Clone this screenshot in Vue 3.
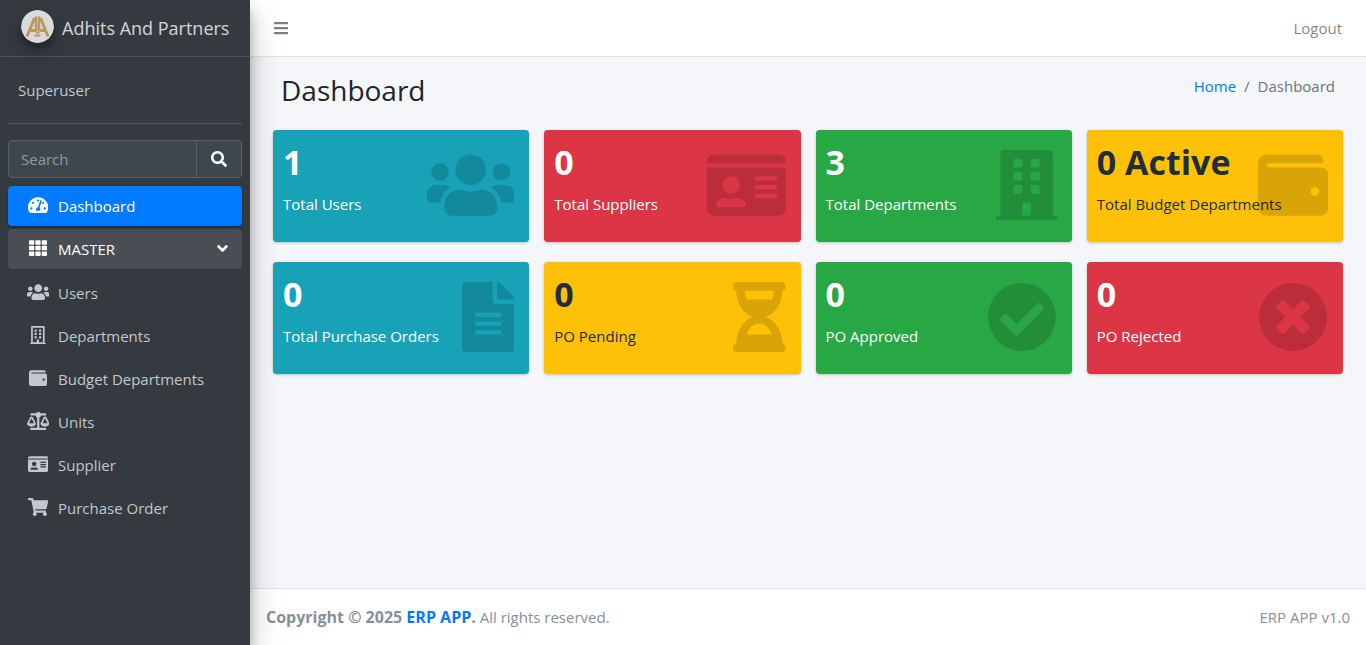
<script setup>
import { h, ref } from 'vue'

const roundedRect = (x, y, w, ht, r) =>
  `M${x + r} ${y}h${w - 2 * r}a${r} ${r} 0 0 1 ${r} ${r}v${ht - 2 * r}a${r} ${r} 0 0 1 ${-r} ${r}h${2 * r - w}a${r} ${r} 0 0 1 ${-r} ${-r}v${2 * r - ht}a${r} ${r} 0 0 1 ${r} ${-r}z`

const rectGrid = (xs, ys, w, ht, r) =>
  ys.map((y) => xs.map((x) => roundedRect(x, y, w, ht, r)).join('')).join('')

const buildingShell = 'M436 480h-20V24c0-13.3-10.7-24-24-24H56C42.7 0 32 10.7 32 24v456H12c-6.6 0-12 5.4-12 12v20h448v-20c0-6.6-5.4-12-12-12z'

const icons = {
  users: [640, 'M96 224c35.3 0 64-28.7 64-64s-28.7-64-64-64-64 28.7-64 64 28.7 64 64 64zm448 0c35.3 0 64-28.7 64-64s-28.7-64-64-64-64 28.7-64 64 28.7 64 64 64zm32 32h-64c-17.6 0-33.5 7.1-45.1 18.6 40.3 22.1 68.9 62 75.1 109.4h66c17.7 0 32-14.3 32-32v-32c0-35.3-28.7-64-64-64zm-256 0c61.9 0 112-50.1 112-112S381.9 32 320 32 208 82.1 208 144s50.1 112 112 112zm76.8 32h-8.3c-20.8 10-43.9 16-68.5 16s-47.6-6-68.5-16h-8.3C179.6 288 128 339.6 128 403.2V432c0 26.5 21.5 48 48 48h288c26.5 0 48-21.5 48-48v-28.8c0-63.6-51.6-115.2-115.2-115.2zm-223.7-13.4C161.5 263.1 145.6 256 128 256H64c-35.3 0-64 28.7-64 64v32c0 17.7 14.3 32 32 32h65.9c6.3-47.4 34.9-87.3 75.2-109.4z'],
  card: [576, 'M528 32H48C21.5 32 0 53.5 0 80v16h576V80c0-26.5-21.5-48-48-48zM0 432c0 26.5 21.5 48 48 48h480c26.5 0 48-21.5 48-48V128H0v304z' + rectGrid([352], [192, 256, 320], 160, 32, 8) + 'M176 192c35.3 0 64 28.7 64 64s-28.7 64-64 64-64-28.7-64-64 28.7-64 64-64zM67.1 396.2C75.5 370.5 99.6 352 128 352h8.2c12.3 5.1 25.7 8 39.8 8s27.6-2.9 39.8-8h8.2c28.4 0 52.5 18.5 60.9 44.2 3.2 9.9-5.2 19.8-15.6 19.8H82.7c-10.4 0-18.8-10-15.6-19.8z'],
  building: [448, buildingShell + rectGrid([128, 256], [64, 160, 256], 64, 64, 12) + roundedRect(192, 384, 64, 96, 12)],
  buildingLine: [448, buildingShell + 'M80 48h288v416H256v-68c0-6.6-5.4-12-12-12h-40c-6.6 0-12 5.4-12 12v68H80z' + rectGrid([128, 256], [96, 192, 288], 64, 64, 12)],
  wallet: [512, 'M461.2 128H80c-8.84 0-16-7.16-16-16s7.16-16 16-16h384c8.84 0 16-7.16 16-16 0-26.51-21.49-48-48-48H64C28.65 32 0 60.65 0 96v320c0 35.35 28.65 64 64 64h397.2c28.02 0 50.8-21.53 50.8-48V176c0-26.47-22.78-48-50.8-48zM416 336c-17.67 0-32-14.33-32-32s14.33-32 32-32 32 14.33 32 32-14.33 32-32 32z'],
  file: [384, 'M224 136V0H24C10.7 0 0 10.7 0 24v464c0 13.3 10.7 24 24 24h336c13.3 0 24-10.7 24-24V160H248c-13.2 0-24-10.8-24-24zm64 236c0 6.6-5.4 12-12 12H108c-6.6 0-12-5.4-12-12v-8c0-6.6 5.4-12 12-12h168c6.6 0 12 5.4 12 12v8zm0-64c0 6.6-5.4 12-12 12H108c-6.6 0-12-5.4-12-12v-8c0-6.6 5.4-12 12-12h168c6.6 0 12 5.4 12 12v8zm0-72v8c0 6.6-5.4 12-12 12H108c-6.6 0-12-5.4-12-12v-8c0-6.6 5.4-12 12-12h168c6.6 0 12 5.4 12 12zm96-114.1v6.1H256V0h6.1c6.4 0 12.5 2.5 17 7l97.9 98c4.5 4.5 7 10.6 7 16.9z'],
  hourglass: [384, 'M360 0H24C10.745 0 0 10.745 0 24v16c0 13.255 10.745 24 24 24 0 90.965 51.016 167.734 120.842 192C75.016 280.266 24 357.035 24 448c-13.255 0-24 10.745-24 24v16c0 13.255 10.745 24 24 24h336c13.255 0 24-10.745 24-24v-16c0-13.255-10.745-24-24-24 0-90.965-51.016-167.734-120.842-192C308.984 231.734 360 154.965 360 64c13.255 0 24-10.745 24-24V24c0-13.255-10.745-24-24-24zm-75.078 384H99.08c17.059-46.797 52.096-80 92.92-80 40.821 0 75.862 33.196 92.922 80zm.019-256H99.078C91.988 108.548 88 86.748 88 64h208c0 22.805-3.987 44.587-11.059 64z'],
  check: [512, 'M504 256c0 136.967-111.033 248-248 248S8 392.967 8 256 119.033 8 256 8s248 111.033 248 248zM227.314 387.314l184-184c6.248-6.248 6.248-16.379 0-22.627l-22.627-22.627c-6.248-6.249-16.379-6.249-22.628 0L216 308.118l-70.059-70.059c-6.248-6.248-16.379-6.248-22.628 0l-22.627 22.627c-6.248 6.248-6.248 16.379 0 22.627l104 104c6.249 6.249 16.379 6.249 22.628.001z'],
  times: [512, 'M256 8C119 8 8 119 8 256s111 248 248 248 248-111 248-248S393 8 256 8zm121.6 313.1c4.7 4.7 4.7 12.3 0 17L338 377.6c-4.7 4.7-12.3 4.7-17 0L256 312l-65.1 65.6c-4.7 4.7-12.3 4.7-17 0L134.4 338c-4.7-4.7-4.7-12.3 0-17l65.6-65-65.6-65.1c-4.7-4.7-4.7-12.3 0-17l39.6-39.6c4.7-4.7 12.3-4.7 17 0l65 65.7 65.1-65.6c4.7-4.7 12.3-4.7 17 0l39.6 39.6c4.7 4.7 4.7 12.3 0 17L312 256l65.6 65.1z'],
  search: [512, 'M505 442.7L405.3 343c-4.5-4.5-10.6-7-17-7H372c27.6-35.3 44-79.7 44-128C416 93.1 322.9 0 208 0S0 93.1 0 208s93.1 208 208 208c48.3 0 92.7-16.4 128-44v16.3c0 6.4 2.5 12.5 7 17l99.7 99.7c9.4 9.4 24.6 9.4 33.9 0l28.3-28.3c9.4-9.4 9.4-24.6.1-34zM208 336c-70.7 0-128-57.2-128-128 0-70.7 57.2-128 128-128 70.7 0 128 57.2 128 128 0 70.7-57.2 128-128 128z'],
  gauge: [576, 'M288 32C128.94 32 0 160.94 0 320c0 52.8 14.25 102.26 39.06 144.8 5.61 9.62 16.3 15.2 27.44 15.2h443c11.14 0 21.83-5.58 27.44-15.2C561.75 422.26 576 372.8 576 320c0-159.06-128.94-288-288-288zm0 64c14.71 0 26.58 10.13 30.32 23.65-1.11 2.26-2.64 4.23-3.45 6.67l-9.22 27.67c-5.13 3.49-10.97 6.01-17.64 6.01-17.67 0-32-14.33-32-32S270.33 96 288 96zM96 384c-17.67 0-32-14.33-32-32s14.33-32 32-32 32 14.33 32 32-14.33 32-32 32zm48-160c-17.67 0-32-14.33-32-32s14.33-32 32-32 32 14.33 32 32-14.33 32-32 32zm246.77-72.41l-61.33 184C343.13 347.33 352 364.54 352 384c0 11.72-3.38 22.55-8.88 32H232.88c-5.5-9.45-8.88-20.28-8.88-32 0-33.94 26.5-61.43 59.9-63.59l61.34-184.01c4.17-12.56 17.73-19.45 30.36-15.17 12.57 4.19 19.35 17.79 15.17 30.36zm14.66 57.2l15.52-46.55c3.47-1.29 7.13-2.23 11.05-2.23 17.67 0 32 14.33 32 32s-14.33 32-32 32c-11.38-.01-20.89-6.28-26.57-15.22zM480 384c-17.67 0-32-14.33-32-32s14.33-32 32-32 32 14.33 32 32-14.33 32-32 32z'],
  grid: [512, rectGrid([0, 181, 362], [32, 192, 352], 150, 128, 24)],
  scale: [640, 'M256 336h-.02c0-16.18 1.34-8.73-85.05-181.51-17.65-35.29-68.19-35.36-85.87 0C-2.06 328.75.02 320.33.02 336H0c0 44.18 57.31 80 128 80s128-35.82 128-80zM128 176l72 144H56l72-144zm511.98 160c0-16.18 1.34-8.73-85.05-181.51-17.65-35.29-68.19-35.36-85.87 0-87.12 174.26-85.04 165.84-85.04 181.51H384c0 44.18 57.31 80 128 80s128-35.82 128-80h-.02zM440 320l72-144 72 144H440zm88 128H352V153.25c23.51-10.29 41.16-31.48 46.39-57.25H528c8.84 0 16-7.16 16-16V48c0-8.84-7.16-16-16-16H383.64C369.04 12.68 346.09 0 320 0s-49.04 12.68-63.64 32H112c-8.84 0-16 7.16-16 16v32c0 8.84 7.16 16 16 16h129.61c5.23 25.76 22.87 46.96 46.39 57.25V448H112c-8.84 0-16 7.16-16 16v32c0 8.84 7.16 16 16 16h416c8.84 0 16-7.16 16-16v-32c0-8.84-7.16-16-16-16z'],
  cart: [576, 'M528.12 301.319l47.273-208C578.806 78.301 567.391 64 551.99 64H159.208l-9.166-44.81C147.758 8.021 137.93 0 126.529 0H24C10.745 0 0 10.745 0 24v16c0 13.255 10.745 24 24 24h69.883l70.248 343.435C147.325 417.1 136 435.222 136 456c0 30.928 25.072 56 56 56s56-25.072 56-56c0-15.674-6.447-29.835-16.824-40h209.647C430.447 426.165 424 440.326 424 456c0 30.928 25.072 56 56 56s56-25.072 56-56c0-22.172-12.888-41.332-31.579-50.405l5.517-24.276c3.413-15.018-8.002-29.319-23.403-29.319H218.117l-6.545-32h293.145c11.206 0 20.92-7.754 23.403-18.681z'],
  bars: [448, rectGrid([0], [60, 220, 380], 448, 72, 16)],
  down: [320, 'M143 352.3L7 216.3c-9.4-9.4-9.4-24.6 0-33.9l22.6-22.6c9.4-9.4 24.6-9.4 33.9 0l96.4 96.4 96.4-96.4c9.4-9.4 24.6-9.4 33.9 0l22.6 22.6c9.4 9.4 9.4 24.6 0 33.9l-136 136c-9.2 9.4-24.4 9.4-33.8 0z']
}

const Icon = (props) => {
  const [width, path] = icons[props.name]
  return h('svg', { viewBox: `0 0 ${width} 512`, fill: 'currentColor', 'fill-rule': 'evenodd', 'aria-hidden': 'true' }, [h('path', { d: path })])
}
Icon.props = ['name']

const search = ref('')
const open = ref(true)

const masterItems = [
  { label: 'Users', icon: 'users' },
  { label: 'Departments', icon: 'buildingLine' },
  { label: 'Budget Departments', icon: 'wallet' },
  { label: 'Units', icon: 'scale' },
  { label: 'Supplier', icon: 'card' },
  { label: 'Purchase Order', icon: 'cart' }
]

const stats = [
  { value: '1', label: 'Total Users', tone: 'info', icon: 'users' },
  { value: '0', label: 'Total Suppliers', tone: 'danger', icon: 'card' },
  { value: '3', label: 'Total Departments', tone: 'success', icon: 'building' },
  { value: '0 Active', label: 'Total Budget Departments', tone: 'warning', icon: 'wallet' },
  { value: '0', label: 'Total Purchase Orders', tone: 'info', icon: 'file' },
  { value: '0', label: 'PO Pending', tone: 'warning', icon: 'hourglass' },
  { value: '0', label: 'PO Approved', tone: 'success', icon: 'check' },
  { value: '0', label: 'PO Rejected', tone: 'danger', icon: 'times' }
]
</script>

<template>
  <div class="wrapper">
    <aside class="sidebar">
      <a href="#" class="brand">
        <svg class="logo" viewBox="0 0 33 33" aria-hidden="true">
          <circle cx="16.5" cy="16.5" r="16.5" fill="#d9dadb" />
          <g fill="none" stroke="#bb9762">
            <path stroke-width="3" d="M6 26.500L13.500 8M27 26.500L19.500 8M9 20.500h5M19 20.500h5" />
            <path stroke-width="2.500" d="M15 6.500v15M18 6.500v15" />
            <path stroke-width="2" d="M13.500 25.500h6M14.500 22.500h4" />
          </g>
        </svg>
        <span>Adhits And Partners</span>
      </a>
      <div class="side-body">
        <div class="user"><a href="#">Superuser</a></div>
        <form class="search" role="search" @submit.prevent>
          <input v-model="search" type="search" placeholder="Search" aria-label="Search" />
          <button type="submit" aria-label="Submit search"><Icon name="search" /></button>
        </form>
        <nav>
          <ul class="menu">
            <li>
              <a href="#" class="link active"><span class="nav-icon"><Icon name="gauge" /></span>Dashboard</a>
            </li>
            <li>
              <button type="button" class="link open" :aria-expanded="open" @click="open = !open">
                <span class="nav-icon"><Icon name="grid" /></span>MASTER<Icon name="down" class="caret" />
              </button>
              <ul v-show="open" class="menu submenu">
                <li v-for="item in masterItems" :key="item.label">
                  <a href="#" class="link"><span class="nav-icon"><Icon :name="item.icon" /></span>{{ item.label }}</a>
                </li>
              </ul>
            </li>
          </ul>
        </nav>
      </div>
    </aside>

    <div class="page">
      <header class="topbar">
        <button type="button" class="toggle" aria-label="Toggle menu"><Icon name="bars" /></button>
        <a href="#" class="logout">Logout</a>
      </header>

      <main class="content">
        <div class="heading">
          <h1>Dashboard</h1>
          <nav aria-label="Breadcrumb">
            <ol class="crumbs">
              <li><a href="#">Home</a></li>
              <li aria-hidden="true">/</li>
              <li aria-current="page">Dashboard</li>
            </ol>
          </nav>
        </div>
        <section class="cards">
          <article v-for="stat in stats" :key="stat.label" class="card" :class="stat.tone">
            <h3>{{ stat.value }}</h3>
            <p>{{ stat.label }}</p>
            <Icon :name="stat.icon" class="card-icon" />
          </article>
        </section>
      </main>

      <footer class="footer">
        <span><strong>Copyright © 2025 <a href="#">ERP APP</a>.</strong> All rights reserved.</span>
        <span>ERP APP v1.0</span>
      </footer>
    </div>
  </div>
</template>

<style>
body {
  background: #f4f6f9;
}
</style>

<style scoped>
* {
  box-sizing: border-box;
}
.wrapper {
  display: flex;
  min-height: 100vh;
  font-family: "Segoe UI", "Open Sans", "Noto Sans", sans-serif;
  font-size: 15px;
  line-height: 24px;
  color: #212529;
}
a {
  color: #007bff;
  text-decoration: none;
}
button {
  font: inherit;
  border: 0;
  background: none;
  cursor: pointer;
}
.sidebar {
  position: relative;
  z-index: 2;
  flex: none;
  width: 250px;
  background: #343a40;
  box-shadow: 0 14px 28px rgba(0, 0, 0, 0.25), 0 10px 10px rgba(0, 0, 0, 0.22);
}
.brand {
  display: flex;
  align-items: center;
  gap: 8px;
  height: 57px;
  padding: 0 8px 0 21px;
  border-bottom: 1px solid #4b545c;
  color: rgba(255, 255, 255, 0.8);
  font-size: 18px;
  white-space: nowrap;
}
.logo {
  flex: none;
  width: 33px;
  height: 33px;
  margin-bottom: 4px;
  border-radius: 50%;
  box-shadow: 0 10px 20px rgba(0, 0, 0, 0.19), 0 6px 6px rgba(0, 0, 0, 0.23);
}
.side-body {
  padding: 0 8px;
}
.user {
  padding: 21px 10px;
  border-bottom: 1px solid #4f5962;
}
.user a {
  color: #c2c7d0;
}
.search {
  display: flex;
  height: 38px;
  margin: 16px 0 8px;
  border: 1px solid #56606a;
  border-radius: 4px;
  background: #3f474e;
}
.search input {
  flex: 1;
  min-width: 0;
  padding: 0 12px;
  border: 0;
  background: none;
  color: #fff;
  font: inherit;
  outline: none;
}
.search input::placeholder {
  color: #939a9f;
}
.search button {
  display: flex;
  flex: none;
  align-items: center;
  justify-content: center;
  width: 45px;
  padding: 0;
  border-left: 1px solid #56606a;
  color: #fff;
}
.search button svg {
  width: 16px;
  height: 16px;
}
.menu {
  display: flex;
  flex-direction: column;
  gap: 3px;
  margin: 0;
  padding: 0;
  list-style: none;
}
.submenu {
  margin-top: 4px;
}
.link {
  display: flex;
  align-items: center;
  gap: 7px;
  width: 100%;
  height: 40px;
  padding: 0 14px 0 17px;
  border-radius: 4px;
  color: #c2c7d0;
  text-align: left;
}
.link.active {
  background: #007bff;
  color: #fff;
  box-shadow: 0 1px 3px rgba(0, 0, 0, 0.12), 0 1px 2px rgba(0, 0, 0, 0.24);
}
.link.open {
  background: rgba(255, 255, 255, 0.1);
  color: #fff;
}
.nav-icon {
  display: flex;
  flex: none;
  justify-content: center;
  width: 26px;
  margin-bottom: 2px;
}
.nav-icon svg {
  flex: none;
  height: 18px;
}
.caret {
  flex: none;
  width: 11px;
  height: 17px;
  margin-left: auto;
  margin-bottom: 2px;
}
.page {
  display: flex;
  flex: 1;
  flex-direction: column;
  min-width: 0;
}
.topbar {
  display: flex;
  align-items: center;
  justify-content: space-between;
  height: 57px;
  padding: 0 24px;
  border-bottom: 1px solid #dee2e6;
  background: #fff;
}
.toggle {
  display: flex;
  padding: 0;
  color: rgba(0, 0, 0, 0.5);
}
.toggle svg {
  height: 16px;
}
.logout {
  color: rgba(0, 0, 0, 0.5);
}
.content {
  flex: 1;
  padding: 15px 23px;
}
.heading {
  display: flex;
  justify-content: space-between;
  padding: 0 8px;
  margin-bottom: 22px;
}
h1 {
  margin: 0;
  font-size: 28px;
  font-weight: 500;
  line-height: 36px;
}
.crumbs {
  display: flex;
  gap: 8px;
  margin: 0;
  padding: 2px 0;
  color: #6c757d;
  list-style: none;
}
.cards {
  display: grid;
  grid-template-columns: repeat(4, 1fr);
  gap: 20px 15px;
}
.card {
  position: relative;
  height: 112px;
  padding: 10px;
  border-radius: 4px;
  box-shadow: 0 0 1px rgba(0, 0, 0, 0.125), 0 1px 3px rgba(0, 0, 0, 0.2);
  color: #fff;
}
.card h3 {
  margin: 0 0 8px;
  font-size: 34px;
  font-weight: 700;
  line-height: 44px;
  white-space: nowrap;
}
.card p {
  margin: 0;
}
.card-icon {
  position: absolute;
  top: 20px;
  right: 15px;
  height: 70px;
  color: rgba(0, 0, 0, 0.15);
}
.info {
  background: #17a2b8;
}
.danger {
  background: #dc3545;
}
.success {
  background: #28a745;
}
.warning {
  background: #ffc107;
  color: #1f2d3d;
}
.footer {
  display: flex;
  justify-content: space-between;
  padding: 16px;
  border-top: 1px solid #dee2e6;
  background: #fff;
  color: #869099;
}
.footer strong {
  font-size: 16px;
}
</style>
